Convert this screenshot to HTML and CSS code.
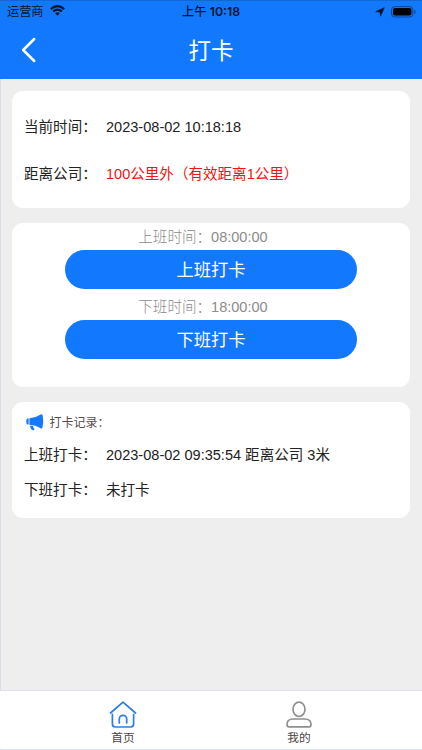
FILE: index.html
```html
<!DOCTYPE html>
<html lang="zh-CN">
<head>
<meta charset="utf-8">
<title>打卡</title>
<link rel="stylesheet" href="styles.css">
</head>
<body>
<div class="app">
  <header class="header">
    <div class="status">
      <div class="carrier"><span>运营商</span>
        <svg width="15" height="11" viewBox="0 0 15 11" fill="none" stroke="#07142b" stroke-width="2.1"><path d="M.8 4.1Q7.5-1.7 14.2 4.1"/><path d="M3.2 6.5Q7.5 2.8 11.8 6.5"/><path d="M5.1 8.1Q7.5 6.3 9.9 8.1L7.5 10.7Z" fill="#07142b" stroke="none"/></svg>
      </div>
      <div class="clock"><span>上午</span> <span class="clock-time">10:18</span></div>
      <div class="indicators">
        <svg width="10" height="10" viewBox="0 0 10 10"><path d="M9.3.7 5.6 9.2 5 5.2.7 4.6Z" fill="#07142b" stroke="#07142b" stroke-width=".6" stroke-linejoin="round"/></svg>
        <svg width="25" height="12" viewBox="0 0 25 12"><rect x=".6" y=".6" width="21.2" height="10.4" rx="3" fill="none" stroke="#0b438e"/><rect x="2" y="2" width="18.4" height="7.6" rx="1.8" fill="#000"/><path d="M23.2 4v3.8q1.4-.5 1.4-1.9T23.2 4Z" fill="#0b438e"/></svg>
      </div>
    </div>
    <div class="navbar">
      <svg class="back" width="16" height="26" viewBox="0 0 16 26" fill="none" stroke="#fff" stroke-width="2.5" stroke-linecap="round" stroke-linejoin="round"><path d="M13.2 2 2.2 13l11 11"/></svg>
      <h1>打卡</h1>
    </div>
  </header>
  <main class="content">
    <section class="card info">
      <div class="row"><span class="label">当前时间：</span><span>2023-08-02 10:18:18</span></div>
      <div class="row"><span class="label">距离公司：</span><span class="far">100公里外（有效距离1公里）</span></div>
    </section>
    <section class="card punch">
      <p class="shift">上班时间：08:00:00</p>
      <button class="btn">上班打卡</button>
      <p class="shift">下班时间：18:00:00</p>
      <button class="btn">下班打卡</button>
    </section>
    <section class="card records">
      <div class="records-title">
        <svg width="18" height="17" viewBox="0 0 18 17" fill="#1677ff"><path d="M3.4 4.2Q9.5 3.900 14.700.4q1.300-.6 1.700.3 1.600 5.900 0 13-.4 1.200-1.700.5Q9.700 11 3.400 10.800Z"/><path d="M.9 4.500h1.700v6H.9Q-.4 7.500.9 4.500Z"/><path d="M4 11.800l3 .3q0 1.700 1.500 2.900l-.7 1.300-1.900-.3Q4.300 14.200 4 11.800Z"/></svg>
        <span>打卡记录：</span>
      </div>
      <div class="row"><span class="label">上班打卡：</span><span>2023-08-02 09:35:54 距离公司 3米</span></div>
      <div class="row"><span class="label">下班打卡：</span><span>未打卡</span></div>
    </section>
  </main>
  <nav class="tabbar">
    <div class="tab">
      <svg width="28" height="28" viewBox="0 0 28 28" fill="none" stroke="#2b7de9" stroke-width="1.700" stroke-linecap="round" stroke-linejoin="round"><path d="M1.500 13 14 2.200l12.500 10.800"/><path d="M3.400 14.300v9.700q0 3 3 3h15.200q3 0 3-3v-9.700"/><path d="M10.300 23v-4a3.700 3.700 0 0 1 7.400 0v4"/></svg>
      <span>首页</span>
    </div>
    <div class="tab">
      <svg width="28" height="28" viewBox="0 0 28 28" fill="none" stroke="#8f8f8f" stroke-width="1.700"><ellipse cx="14" cy="9.300" rx="6" ry="7.200"/><path d="M8 19h12q6 0 6 5.800 0 2-2 2H4q-2 0-2-2Q2 19 8 19Z"/></svg>
      <span>我的</span>
    </div>
  </nav>
</div>
</body>
</html>
```
FILE: styles.css
```css
* { box-sizing: border-box; margin: 0; padding: 0; }
body {
  width: 422px;
  height: 750px;
  overflow: hidden;
  font-family: "Liberation Sans", "Noto Sans CJK SC", sans-serif;
  font-size: 14.55px;
  color: #222;
}
svg { display: block; flex: none; }
.app {
  height: 750px;
  display: flex;
  flex-direction: column;
  background: #eee;
  border-left: 1px solid #dadde8;
  border-bottom: 1px solid #e1e7f4;
}
.header {
  height: 79px;
  margin-left: -1px;
  background: #1279ff;
  border-top: 1px solid #1068d8;
  color: #fff;
}
.status {
  height: 21px;
  padding: 0 7px;
  display: grid;
  grid-template-columns: 1fr auto 1fr;
  align-items: center;
  color: #07142b;
  font-size: 12.2px;
  line-height: 20px;
}
.carrier, .indicators { display: flex; align-items: center; gap: 6px; }
.indicators { justify-content: flex-end; }
.indicators svg:last-child { margin-right: -1px; }
.carrier svg { margin-top: -2px; }
.clock { font-weight: 500; white-space: nowrap; }
.clock-time { font-family: Inter, sans-serif; font-weight: 600; font-size: 12.3px; }
.navbar {
  height: 57px;
  display: grid;
  grid-template-columns: 50px 1fr 50px;
  align-items: center;
}
.back { margin-left: 21px; margin-top: -2px; }
h1 { text-align: center; font-size: 22.5px; font-weight: 400; line-height: 57px; padding-top: 1px; }
.content {
  flex: 1;
  padding: 12px 12px 0 11px;
  display: flex;
  flex-direction: column;
  gap: 15px;
}
.card { background: #fff; border-radius: 11px; }
.row { display: flex; white-space: pre; }
.label { width: 82px; }
.info { height: 117px; padding: 13px 12px 11px; }
.info .row { height: 47px; line-height: 47px; }
.far { color: #f01414; }
.punch {
  height: 164px;
  display: flex;
  flex-direction: column;
  align-items: center;
}
.shift {
  height: 27px;
  line-height: 29px;
  font-weight: 300;
  color: #8b8b8b;
  padding-right: 16px;
}
.btn {
  width: 292px;
  height: 39px;
  border: 0;
  border-radius: 20px;
  background: #1279ff;
  color: #fff;
  padding-top: 1px;
  font: 17.3px/38px "Liberation Sans", "Noto Sans CJK SC", sans-serif;
}
.btn + .shift { margin-top: 4px; }
.records { height: 116.5px; margin-top: -0.5px; padding: 12px; }
.records-title {
  height: 17px;
  display: flex;
  align-items: center;
  gap: 5.5px;
  padding-left: 2px;
  font-size: 12px;
  color: #594b4d;
}
.records-title span { margin-top: -2px; }
.records .row { height: 35px; line-height: 35px; }
.records-title + .row { margin-top: 7px; }
.tabbar {
  height: 59px;
  margin-left: -1px;
  background: #fff;
  border-top: 1px solid #dfe1ef;
  display: flex;
  padding: 0 35px;
}
.tab {
  flex: 1;
  display: flex;
  flex-direction: column;
  align-items: center;
  padding-top: 9px;
  font-size: 11.7px;
  line-height: 19px;
  color: #4c4444;
}
```
